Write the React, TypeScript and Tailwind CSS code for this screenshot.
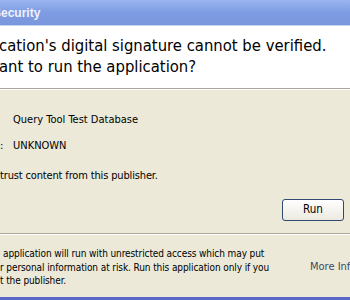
import React from "react";

export default function App() {
  const font = { fontFamily: '"DejaVu Sans Condensed", "DejaVu Sans", Tahoma, sans-serif' };
  return (
    <div
      className="w-[350px] h-[300px] overflow-hidden bg-[#ece9d8] flex flex-col text-black"
      style={font}
    >
      <div className="h-[25px] shrink-0 bg-gradient-to-b from-[#9ab4ee] via-[#7e9ce3] to-[#7a97de] flex items-center overflow-hidden">
        <span
          className="text-[12px] font-bold text-[#eef2fc] leading-none -ml-[7px] whitespace-nowrap"
          style={{ fontFamily: '"Liberation Sans", Arial, sans-serif' }}
        >
          Security
        </span>
      </div>
      <div className="h-px shrink-0 bg-[#c9d4f0]" />
      <div className="h-[62px] shrink-0 bg-white flex flex-col justify-center text-[16.5px] leading-[21px] pb-[2px]">
        <div className="-ml-[1px] whitespace-nowrap">cation's digital signature cannot be verified.</div>
        <div className="-ml-[1px] whitespace-nowrap">ant to run the application?</div>
      </div>
      <div className="h-px shrink-0 bg-[#aca899]" />
      <div className="h-px shrink-0 bg-white" />
      <div className="flex flex-col text-[11px] leading-[13px]">
        <div className="pl-[13px] mt-[23px] whitespace-nowrap">Query Tool Test Database</div>
        <div className="flex mt-[13px] whitespace-nowrap">
          <span className="w-[13px]">:</span>
          <span>UNKNOWN</span>
        </div>
        <div className="mt-[17px] whitespace-nowrap tracking-[-0.15px]">trust content from this publisher.</div>
        <div className="flex justify-end pr-[6px] mt-[17px]">
          <button className="w-[62px] h-[22px] rounded-[3px] border border-[#2f4a6e] bg-gradient-to-b from-white to-[#ece9e0] text-[11.5px] leading-none">
            Run
          </button>
        </div>
      </div>
      <div className="h-px shrink-0 bg-[#aca899] mt-[12px]" />
      <div className="h-px shrink-0 bg-white" />
      <div className="flex items-start text-[10px] leading-[13.5px] mt-[12px]">
        <div className="flex-1 whitespace-nowrap tracking-[-0.1px]">
          <div className="pl-[3px]">application will run with unrestricted access which may put</div>
          <div>r personal information at risk. Run this application only if you</div>
          <div>t the publisher.</div>
        </div>
        <div className="mt-[13px] text-[11px] text-[#3b4a63] whitespace-nowrap w-[40px]">More Information...</div>
      </div>
      <div className="flex-1" />
      <div className="h-[3px] shrink-0 bg-[#5a67c8]" />
    </div>
  );
}
